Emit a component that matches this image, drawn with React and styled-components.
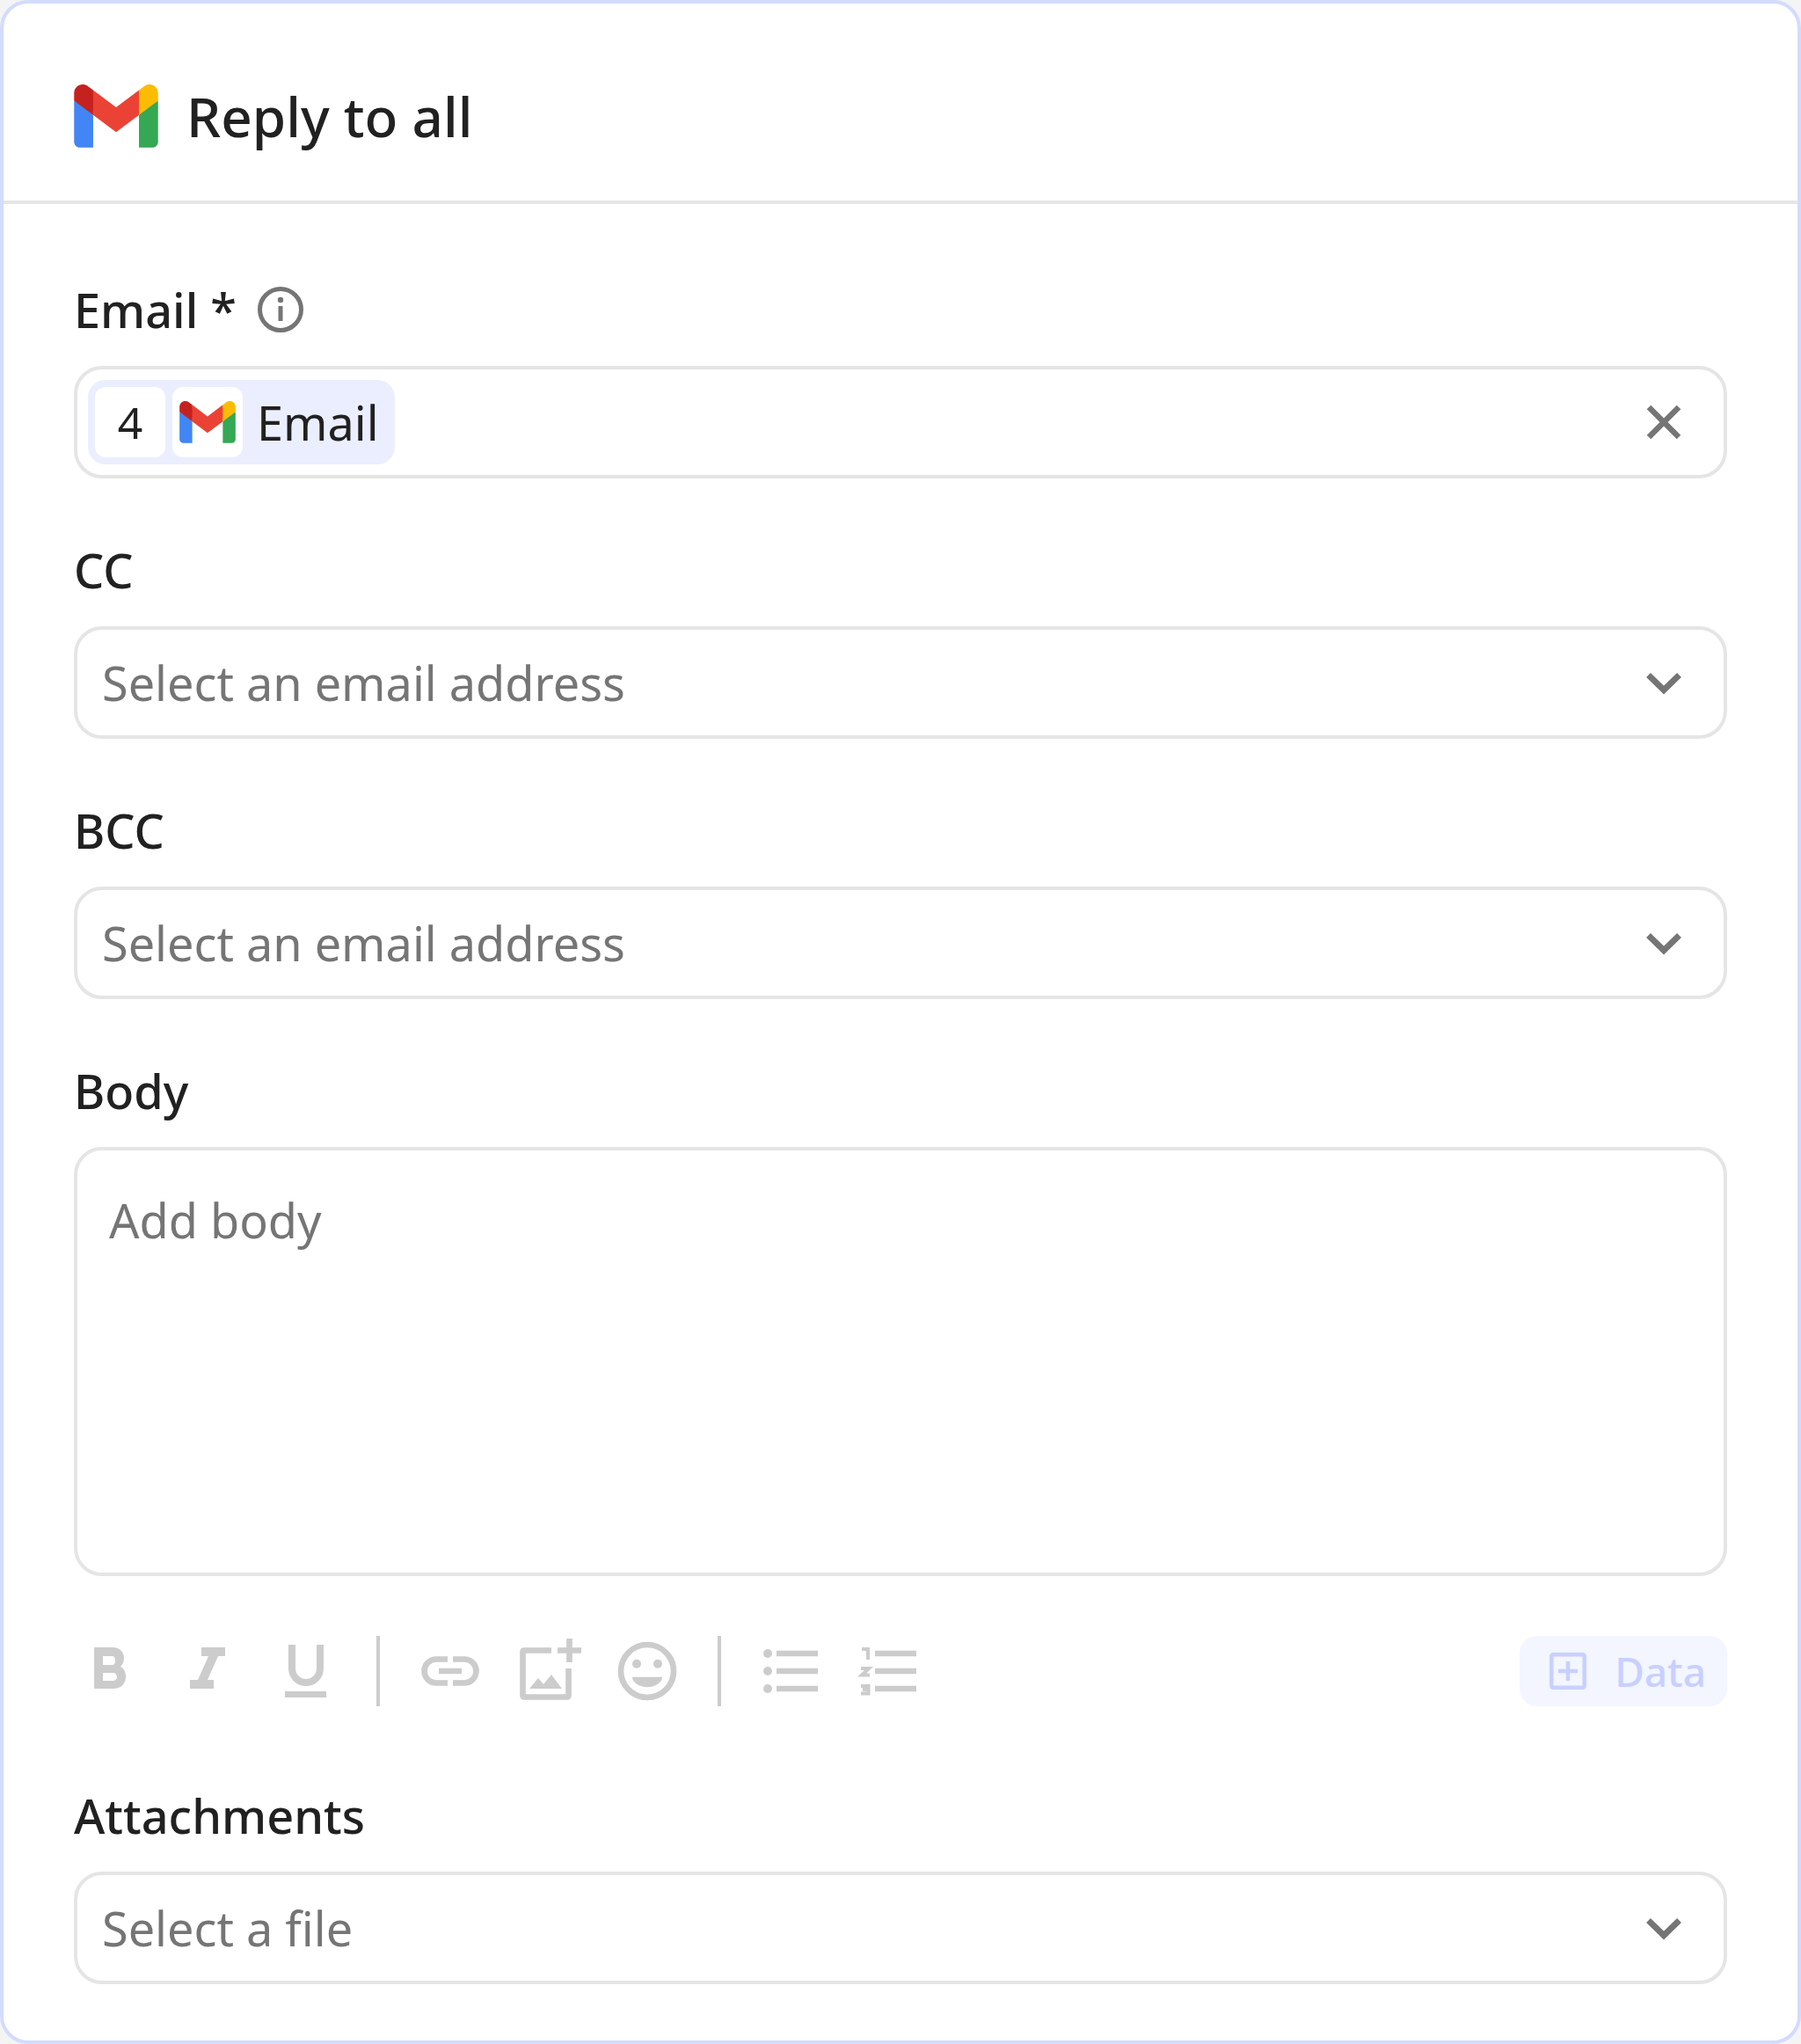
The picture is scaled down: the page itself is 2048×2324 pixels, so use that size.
import React from 'react';
import styled, { createGlobalStyle } from 'styled-components';

const GlobalStyle = createGlobalStyle`
  body {
    margin: 0;
    background: #f4f4f4;
    font-family: "Noto Sans", "Open Sans", sans-serif;
    color: #212121;
  }
`;

const Card = styled.div`
  box-sizing: border-box;
  width: 2048px;
  height: 2324px;
  background: #fff;
  border: 4px solid #d3dbff;
  border-radius: 32px;
`;

const Header = styled.header`
  display: flex;
  align-items: center;
  gap: 32px;
  height: 228px;
  padding: 32px 80px 0;
  box-sizing: border-box;
  border-bottom: 4px solid #e5e5e5;
`;

const Title = styled.h1`
  margin: 0;
  font-size: 62px;
  font-weight: 500;
  line-height: 80px;
`;

const Content = styled.div`
  display: flex;
  flex-direction: column;
  padding: 80px 80px 0;
`;

const Section = styled.section`
  display: flex;
  flex-direction: column;
  margin-bottom: ${props => props.$gap ?? 64}px;
`;

const Label = styled.label`
  display: flex;
  align-items: center;
  gap: 24px;
  height: 80px;
  margin-bottom: 24px;
  font-size: 54px;
  font-weight: 500;
`;

const Field = styled.div`
  box-sizing: border-box;
  display: flex;
  align-items: center;
  justify-content: space-between;
  height: 128px;
  padding: 0 48px 0 28px;
  border: 4px solid #e5e5e5;
  border-radius: 32px;
`;

const Placeholder = styled.span`
  font-size: 54px;
  color: #757575;
`;

const Chip = styled.div`
  display: flex;
  align-items: center;
  gap: 8px;
  height: 96px;
  margin-left: -16px;
  padding: 0 18px 0 8px;
  background: #ebeefe;
  border-radius: 20px;
  font-size: 54px;
`;

const ChipCell = styled.span`
  display: flex;
  align-items: center;
  justify-content: center;
  width: 80px;
  height: 80px;
  background: #fff;
  border-radius: 12px;
  margin-right: ${props => props.$end || 0}px;
`;

const ChipCount = styled(ChipCell)`
  font-size: 50px;
`;

const TextArea = styled.div`
  box-sizing: border-box;
  height: 488px;
  padding: 42px 36px;
  border: 4px solid #e5e5e5;
  border-radius: 32px;
`;

const Toolbar = styled.div`
  display: flex;
  align-items: center;
  gap: 32px;
  height: 80px;
  margin-top: 68px;
  margin-bottom: 84px;
`;

const ToolDivider = styled.span`
  width: 4px;
  height: 80px;
  margin: 0 8px;
  background: #ccc;
`;

const DataButton = styled.button`
  display: flex;
  align-items: center;
  gap: 32px;
  height: 80px;
  margin-left: auto;
  padding: 0 24px 0 34px;
  border: 0;
  border-radius: 20px;
  background: #f3f5ff;
  color: #c7d0ff;
  font-family: inherit;
  font-size: 46px;
  font-weight: 500;
`;

function GmailLogo({ width, height }) {
  return (
    <svg width={width} height={height} viewBox="0 0 256 193">
      <path fill="#4285F4" d="M58.182 192.05V93.14L27.507 65.077 0 49.504v125.091c0 9.658 7.825 17.455 17.455 17.455h40.727Z" />
      <path fill="#34A853" d="M197.818 192.05h40.727c9.659 0 17.455-7.826 17.455-17.455V49.505l-31.156 17.837-27.026 25.798v98.91Z" />
      <path fill="#EA4335" d="m58.182 93.14-4.174-38.647 4.174-36.989L128 69.868l69.818-52.364 4.669 34.992-4.669 40.644L128 145.504z" />
      <path fill="#FBBC04" d="M197.818 17.504V93.14L256 49.504V26.231c0-21.585-24.64-33.89-41.89-20.945l-16.292 12.218Z" />
      <path fill="#C5221F" d="M0 49.504l26.759 20.07L58.182 93.14V17.504L41.89 5.286C24.61-7.66 0 4.646 0 26.23v23.273Z" />
    </svg>
  );
}

function InfoIcon() {
  return (
    <svg width="52" height="52" viewBox="0 0 52 52" fill="none" stroke="#757575" strokeWidth="5">
      <circle cx="26" cy="26" r="23.5" />
      <path d="M26 22v17" />
      <circle cx="26" cy="15" r="3.2" fill="#757575" stroke="none" />
    </svg>
  );
}

function CloseIcon() {
  return (
    <svg width="40" height="40" viewBox="0 0 40 40" fill="none" stroke="#757575" strokeWidth="6.5">
      <path d="M3 3l34 34M37 3L3 37" />
    </svg>
  );
}

function ChevronIcon() {
  return (
    <svg width="40" height="40" viewBox="0 0 40 40" fill="none" stroke="#757575" strokeWidth="7">
      <path d="M2.500 11.500L20 28.500 37.500 11.500" />
    </svg>
  );
}

function ToolIcon({ children }) {
  return (
    <svg width="80" height="80" viewBox="0 0 80 80" fill="none" stroke="#ccc" strokeWidth="6.67">
      {children}
    </svg>
  );
}

const BoldIcon = () => (
  <ToolIcon>
    <path
      stroke="none"
      fill="#ccc"
      fillRule="evenodd"
      d="M23 13H44C52 13 57 18 57 25C57 30 55 33 53 35C57 37 59 41 59 46C59 55 53 60 45 60H23ZM33 23V33H43C46 33 47 31 47 28C47 25 46 23 43 23ZM33 42V51H44C47 51 49 49 49 46.500C49 44 47 42 44 42Z"
    />
  </ToolIcon>
);

const ItalicIcon = () => (
  <ToolIcon>
    <path stroke="none" fill="#ccc" d="M33 13H60V23H52L40 50H47V60H20V50H29L41 23H33Z" />
  </ToolIcon>
);

const UnderlineIcon = () => (
  <ToolIcon>
    <path strokeWidth="8" d="M24 10V37A16 16 0 0 0 56 37V10" />
    <rect x="16" y="63" width="47" height="7" fill="#ccc" stroke="none" />
  </ToolIcon>
);

const LinkIcon = () => (
  <ToolIcon>
    <path d="M37 26.500H24A13.500 13.500 0 0 0 24 53.500H37M43 26.500H56A13.500 13.500 0 0 1 56 53.500H43M27 40H53" />
  </ToolIcon>
);

const ImageAddIcon = () => (
  <ToolIcon>
    <path strokeLinejoin="round" d="M43 16.500H12A1.500 1.500 0 0 0 10.500 18V68A1.500 1.500 0 0 0 12 69.500H61A1.500 1.500 0 0 0 62.500 68V37" />
    <path d="M63.500 3V30M50 16.500H77" />
    <path stroke="none" fill="#ccc" d="M18 60L28 48 34 55 43 44 55 60Z" />
  </ToolIcon>
);

const SmileIcon = () => (
  <ToolIcon>
    <circle cx="40" cy="40" r="30" />
    <circle cx="28" cy="31.700" r="5" fill="#ccc" stroke="none" />
    <circle cx="52" cy="31.700" r="5" fill="#ccc" stroke="none" />
    <path stroke="none" fill="#ccc" d="M23 46.700H57A17 11.500 0 0 1 23 46.700Z" />
  </ToolIcon>
);

const BulletListIcon = () => (
  <ToolIcon>
    <path d="M23 20H70M23 40H70M23 60H70" />
    <circle cx="13" cy="20" r="5" fill="#ccc" stroke="none" />
    <circle cx="13" cy="40" r="5" fill="#ccc" stroke="none" />
    <circle cx="13" cy="60" r="5" fill="#ccc" stroke="none" />
  </ToolIcon>
);

const NumberListIcon = () => (
  <ToolIcon>
    <path d="M23 20H70M23 40H70M23 60H70" />
    <path strokeWidth="4" d="M8 15H15V27M7 37H16L8 44.500H17M7 57H15.500V65.500H7M9 61H15.500" />
  </ToolIcon>
);

const DataIcon = () => (
  <svg width="42" height="42" viewBox="0 0 42 42" fill="none" stroke="#c7d0ff" strokeWidth="4.500">
    <rect x="2.250" y="2.250" width="37.500" height="37.500" rx="2" />
    <path d="M21 10V32M10 21H32" />
  </svg>
);

export default function App() {
  return (
    <>
      <GlobalStyle />
      <Card>
        <Header>
          <GmailLogo width={96} height={72} />
          <Title>Reply to all</Title>
        </Header>
        <Content>
          <Section>
            <Label>
              Email * <InfoIcon />
            </Label>
            <Field>
              <Chip>
                <ChipCount>4</ChipCount>
                <ChipCell $end={8}>
                  <GmailLogo width={64} height={48} />
                </ChipCell>
                Email
              </Chip>
              <CloseIcon />
            </Field>
          </Section>
          <Section>
            <Label>CC</Label>
            <Field>
              <Placeholder>Select an email address</Placeholder>
              <ChevronIcon />
            </Field>
          </Section>
          <Section>
            <Label>BCC</Label>
            <Field>
              <Placeholder>Select an email address</Placeholder>
              <ChevronIcon />
            </Field>
          </Section>
          <Section $gap={0}>
            <Label>Body</Label>
            <TextArea>
              <Placeholder>Add body</Placeholder>
            </TextArea>
          </Section>
          <Toolbar>
            <BoldIcon />
            <ItalicIcon />
            <UnderlineIcon />
            <ToolDivider />
            <LinkIcon />
            <ImageAddIcon />
            <SmileIcon />
            <ToolDivider />
            <BulletListIcon />
            <NumberListIcon />
            <DataButton>
              <DataIcon />
              Data
            </DataButton>
          </Toolbar>
          <Section $gap={0}>
            <Label>Attachments</Label>
            <Field>
              <Placeholder>Select a file</Placeholder>
              <ChevronIcon />
            </Field>
          </Section>
        </Content>
      </Card>
    </>
  );
}
